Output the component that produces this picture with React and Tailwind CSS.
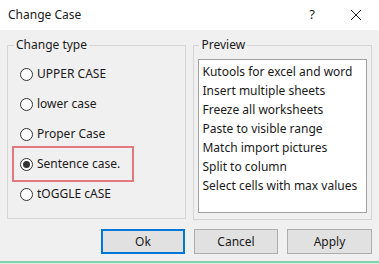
import React, { useState } from 'react'

const types = ["UPPER CASE", "lower case", "Proper Case", "Sentence case.", "tOGGLE cASE"]

const previewLines = [
  "Kutools for excel and word",
  "Insert multiple sheets",
  "Freeze all worksheets",
  "Paste to visible range",
  "Match import pictures",
  "Split to column",
  "Select cells with max values",
]

const Radio = ({ checked }) => {
  return (
    <span className="w-[13px] h-[13px] rounded-full border border-[#333333] bg-white flex items-center justify-center shrink-0">
      {checked && <span className="w-[7px] h-[7px] rounded-full bg-[#333333]" />}
    </span>
  )
}

const App = () => {
  const [selected, setSelected] = useState(3)
  return (
    <div className="w-[379px] h-[264px] bg-[#f0f0f0] flex flex-col text-[12px] text-[#1a1a1a] overflow-hidden" style={{ fontFamily: '"Noto Sans", "Open Sans", sans-serif' }}>
      <div className="h-[30px] bg-white flex items-center pl-[8px] shrink-0">
        <span className="flex-1">Change Case</span>
        <span className="w-[20px] text-center mr-[28px] text-[13px]">?</span>
        <svg width="12" height="12" viewBox="0 0 12 12" className="mr-[17px]">
          <path d="M1 1 L11 11 M11 1 L1 11" stroke="#222" strokeWidth="1" fill="none" />
        </svg>
      </div>

      <div className="flex px-[7px] gap-[7px] mt-[7px]">
        <fieldset className="w-[180px] h-[182px] border border-[#d5d5d5]">
          <legend className="ml-[6px] px-[2px] leading-[16px]">Change type</legend>
          <div className="pt-[6px]">
            {types.map((t, i) => (
              <div
                key={t}
                onClick={() => setSelected(i)}
                className={`ml-[7px] w-[116px] h-[30px] flex items-center gap-[4px] pl-[5px] ${i === 3 ? 'outline-2 outline-[#de7a80] outline-offset-[1px]' : ''}`}
              >
                <Radio checked={selected === i} />
                <span>{t}</span>
              </div>
            ))}
          </div>
        </fieldset>

        <fieldset className="w-[179px] h-[183px] border border-[#d5d5d5] px-[4px] pb-[6px]">
          <legend className="ml-[1px] px-[2px] leading-[16px]">Preview</legend>
          <div className="mt-[6px] h-[154px] bg-white border border-[#a0a0a0] pl-[3px] pt-[2px] leading-[19px]">
            {previewLines.map((l) => (
              <div key={l}>{l}</div>
            ))}
          </div>
        </fieldset>
      </div>

      <div className="flex justify-end gap-[9px] pr-[7px] mt-[9px]">
        <button className="w-[84px] h-[25px] bg-[#e1e1e1] border-2 border-[#0078d7]">Ok</button>
        <button className="w-[84px] h-[25px] bg-[#e1e1e1] border border-[#adadad]">Cancel</button>
        <button className="w-[85px] h-[25px] bg-[#e1e1e1] border border-[#adadad]">Apply</button>
      </div>

      <div className="mt-auto h-[2px] bg-[#8ccfb0]" />
      <div className="h-[1px] bg-[#d8efe4]" />
    </div>
  )
}

export default App
